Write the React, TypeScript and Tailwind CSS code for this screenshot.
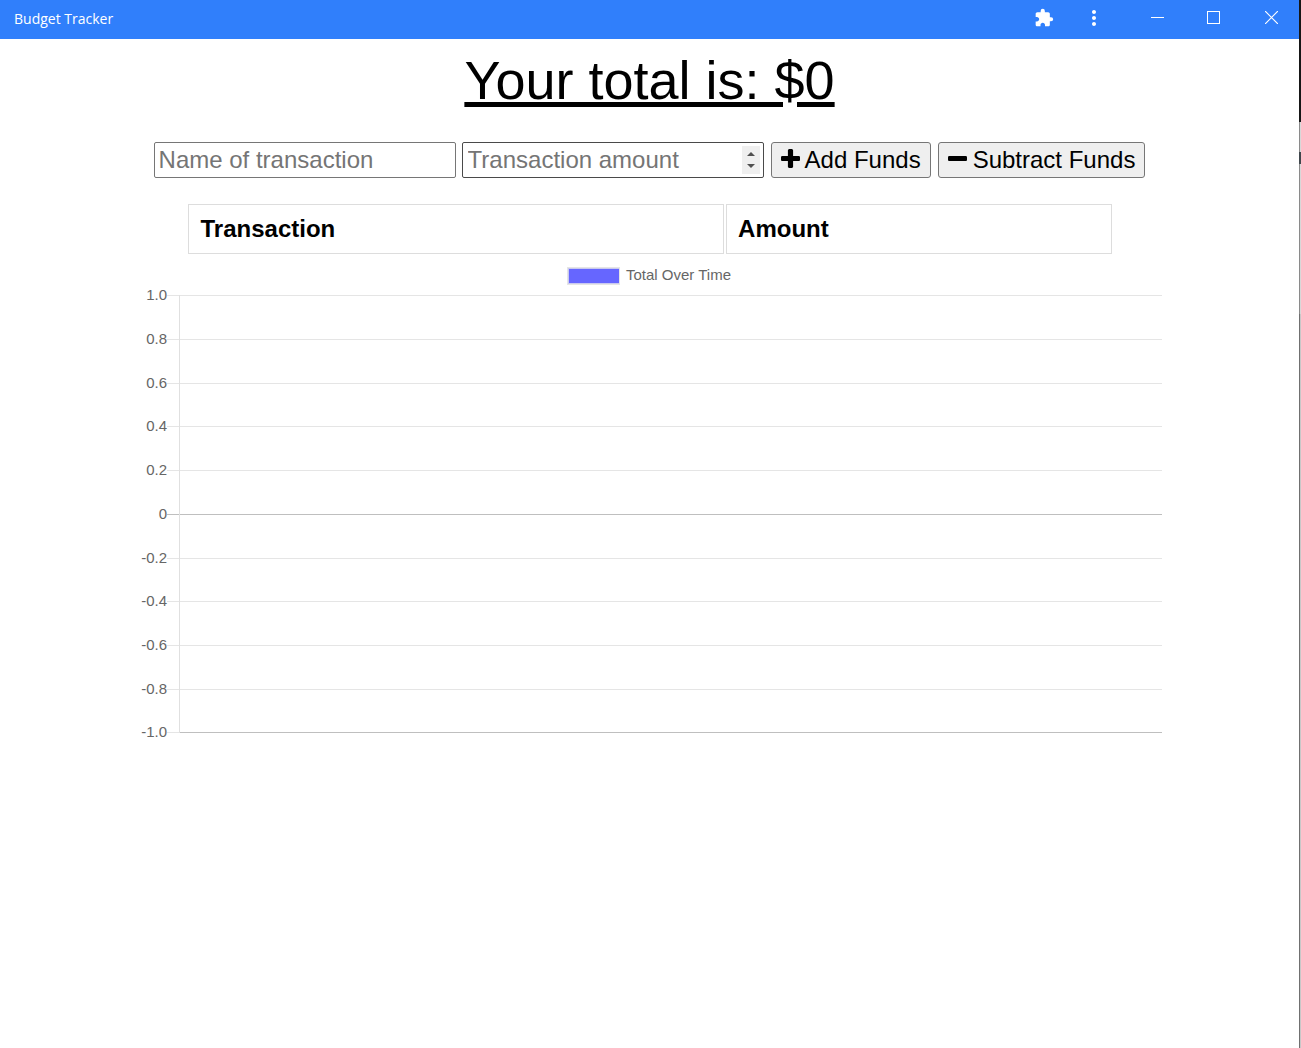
import React from "react";
import { MdExtension, MdMoreVert } from "react-icons/md";

const ticks = [
  { label: "1.0", y: 31 },
  { label: "0.8", y: 75 },
  { label: "0.6", y: 119 },
  { label: "0.4", y: 162 },
  { label: "0.2", y: 206 },
  { label: "0", y: 250 },
  { label: "-0.2", y: 294 },
  { label: "-0.4", y: 337 },
  { label: "-0.6", y: 381 },
  { label: "-0.8", y: 425 },
  { label: "-1.0", y: 468 },
];

function PlusIcon() {
  return (
    <svg width="19" height="19" viewBox="192 128 1408 1408" fill="currentColor" className="mb-[3px]" aria-hidden="true">
      <path d="M1600 736v192q0 40-28 68t-68 28h-416v416q0 40-28 68t-68 28h-192q-40 0-68-28t-28-68v-416h-416q-40 0-68-28t-28-68v-192q0-40 28-68t68-28h416v-416q0-40 28-68t68-28h192q40 0 68 28t28 68v416h416q40 0 68 28t28 68z" />
    </svg>
  );
}

function MinusIcon() {
  return (
    <svg width="19" height="19" viewBox="192 128 1408 1408" fill="currentColor" className="mb-[3px]" aria-hidden="true">
      <path d="M1600 736v192q0 40-28 68t-68 28h-1216q-40 0-68-28t-28-68v-192q0-40 28-68t68-28h1216q40 0 68 28t28 68z" />
    </svg>
  );
}

function TitleBar() {
  return (
    <header className="flex h-[39px] items-center justify-between bg-[#307ffb] pl-[14px] font-['Open_Sans',sans-serif] text-sm text-white">
      <span className="pb-0.5">Budget Tracker</span>
      <div className="flex h-full items-center pb-1">
        <button aria-label="Extensions" className="flex h-9 w-[50px] items-center justify-center">
          <MdExtension size={20} />
        </button>
        <button aria-label="More" className="flex h-9 w-[50px] items-center justify-center">
          <MdMoreVert size={24} />
        </button>
        <span className="w-[10px]" />
        <button aria-label="Minimize" className="flex h-9 w-14 items-center justify-center">
          <svg width="13" height="13" viewBox="0 0 13 13" shapeRendering="crispEdges">
            <path d="M0 6.5h13" stroke="white" />
          </svg>
        </button>
        <button aria-label="Maximize" className="flex h-9 w-14 items-center justify-center">
          <svg width="13" height="13" viewBox="0 0 13 13" fill="none" shapeRendering="crispEdges">
            <rect x="0.5" y="0.5" width="12" height="12" stroke="white" />
          </svg>
        </button>
        <button aria-label="Close" className="flex h-9 w-[58px] items-center justify-center pl-0.5">
          <svg width="13" height="13" viewBox="0 0 13 13">
            <path d="M0 0l13 13M13 0L0 13" stroke="white" strokeWidth="1.2" />
          </svg>
        </button>
      </div>
    </header>
  );
}

function TransactionForm() {
  return (
    <form className="mt-[29px] flex flex-wrap justify-center gap-[6px]" onSubmit={(e) => e.preventDefault()}>
      <input
        type="text"
        aria-label="Name of transaction"
        placeholder="Name of transaction"
        className="h-9 w-[302px] rounded-xs border border-[#767676] px-1 placeholder:text-[#757575]"
      />
      <div className="relative">
        <input
          type="text"
          inputMode="decimal"
          aria-label="Transaction amount"
          placeholder="Transaction amount"
          className="h-9 w-[302px] rounded-xs border border-[#4a4a4a] pr-7 pl-[5px] placeholder:text-[#757575]"
        />
        <div className="absolute top-1 right-1 flex h-7 w-[18px] flex-col bg-[#efefef]">
          <button type="button" aria-label="Increase" className="flex flex-1 items-end justify-center pb-1">
            <svg width="8" height="4" viewBox="0 0 8 4">
              <path d="M0 4L4 0l4 4z" fill="#505050" />
            </svg>
          </button>
          <button type="button" aria-label="Decrease" className="flex flex-1 items-start justify-center pt-1">
            <svg width="8" height="4" viewBox="0 0 8 4">
              <path d="M0 0l4 4 4-4z" fill="#505050" />
            </svg>
          </button>
        </div>
      </div>
      <button type="button" className="ml-px flex h-9 items-center gap-[5px] rounded-[3px] border border-[#767676] bg-[#efefef] px-[9px]">
        <PlusIcon />
        Add Funds
      </button>
      <button type="button" className="ml-px flex h-9 items-center gap-[6px] rounded-[3px] border border-[#767676] bg-[#efefef] px-[9px]">
        <MinusIcon />
        Subtract Funds
      </button>
    </form>
  );
}

function TransactionTable() {
  return (
    <table className="mx-auto mt-6 w-full max-w-[928px] border-separate border-spacing-[2px] text-left">
      <thead>
        <tr>
          <th className="h-[50px] w-[58.2%] border border-[#dddddd] px-3">Transaction</th>
          <th className="h-[50px] border border-[#dddddd] px-[11px]">Amount</th>
        </tr>
      </thead>
      <tbody />
    </table>
  );
}

function TotalChart() {
  return (
    <svg
      role="img"
      aria-label="Total Over Time"
      viewBox="0 0 1025 480"
      className="mx-auto mt-2 block w-full max-w-[1025px] font-['Liberation_Sans',Arial,sans-serif] text-[15px]"
    >
      <rect x="430" y="3" width="53" height="18" fill="#e5e5e5" />
      <rect x="431" y="4" width="51" height="16" fill="#c9c9f0" />
      <rect x="432" y="5" width="50" height="14" fill="#6666ff" />
      <text x="489" y="16" fill="#666666">Total Over Time</text>
      {ticks.map(({ label, y }) => (
        <g key={label}>
          <text x="30" y={y + 5} textAnchor="end" fill="#666666">{label}</text>
          <rect x="30" y={y} width="12" height="1" fill={label === "0" ? "#bfbfbf" : "#e5e5e5"} />
          <rect
            x="42"
            y={y}
            width="983"
            height="1"
            fill={label === "0" || label === "-1.0" ? "#bfbfbf" : "#e5e5e5"}
          />
        </g>
      ))}
      <rect x="42" y="31" width="1" height="438" fill="#e0e0e0" />
    </svg>
  );
}

function WindowEdge() {
  return (
    <div className="flex w-[2px] flex-col">
      <div className="h-[122px] bg-[#161616]" />
      <div className="h-[30px] border-l border-[#8a8a8a] bg-[#d8d8d8]" />
      <div className="h-3 bg-[#40474c]" />
      <div className="h-[150px] border-l border-[#8a8a8a] bg-[#d8d8d8]" />
      <div className="flex-1 border-l border-[#707070] bg-[#c8c8c8]" />
    </div>
  );
}

export default function App() {
  return (
    <div className="flex min-h-screen bg-white font-['Liberation_Sans',Arial,sans-serif] text-2xl text-black">
      <div className="min-w-0 flex-1">
        <TitleBar />
        <main className="px-2 pt-2">
          <h1 className="text-center text-[54px] leading-[66px] underline">Your total is: $0</h1>
          <TransactionForm />
          <TransactionTable />
          <TotalChart />
        </main>
      </div>
      <WindowEdge />
    </div>
  );
}
